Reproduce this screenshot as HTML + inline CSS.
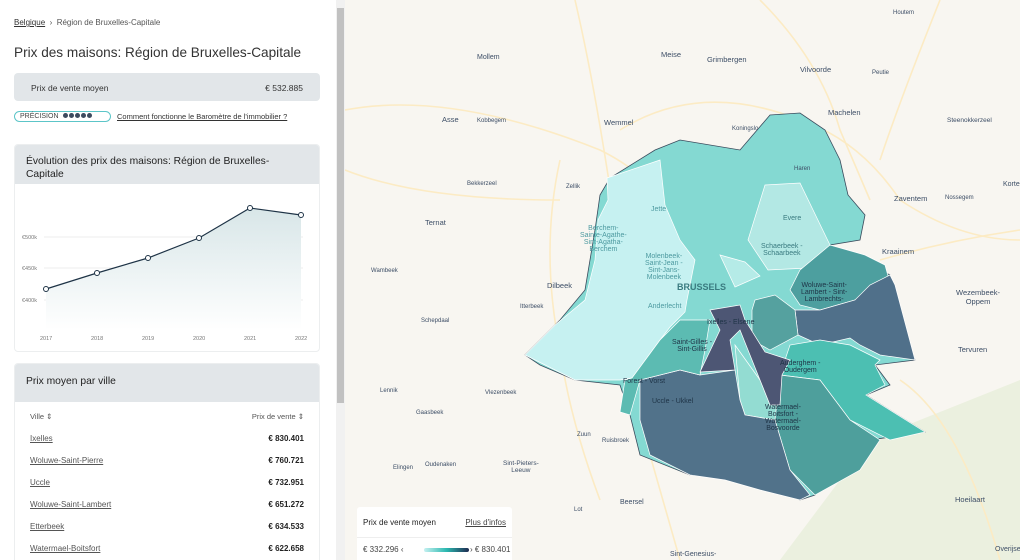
<!DOCTYPE html>
<html><head><meta charset="utf-8"><style>
*{box-sizing:border-box;margin:0;padding:0}
body{width:1020px;height:560px;overflow:hidden;font-family:"Liberation Sans",sans-serif;background:#fff;position:relative}
#left{position:absolute;left:0;top:0;width:336px;height:560px;background:#fff;overflow:hidden}
#sb{position:absolute;left:336px;top:0;width:9px;height:560px;background:#f1f1f1}
#sb div{position:absolute;left:1px;top:8px;width:7px;height:395px;background:#c1c1c1}
#map{position:absolute;left:345px;top:0;width:675px;height:560px;background:#f8f6f1;overflow:hidden}
.bc{position:absolute;left:14px;top:18px;font-size:8px;color:#555}
.bc u{color:#333}
h1{position:absolute;left:14px;top:45px;font-size:13.6px;font-weight:normal;color:#333;white-space:nowrap}
.pv{position:absolute;left:14px;top:73px;width:306px;height:28px;background:#e2e6e9;border-radius:4px;font-size:8.5px;color:#333}
.pv span{position:absolute;top:10px}
.prec{position:absolute;left:14px;top:111px;width:97px;height:11px;border:1px solid #5cc5c8;border-radius:6px;font-size:7px;color:#444;padding-left:5px;line-height:9px}
.prec i{display:inline-block;width:5px;height:5px;border-radius:50%;background:#3c4a5e;margin-left:1px;vertical-align:0}
.lnk{position:absolute;left:117px;top:112px;font-size:7.5px;color:#333;text-decoration:underline}
.card{position:absolute;left:14px;width:306px;border:1px solid #eceeef;border-radius:4px;overflow:hidden;background:#fff}
.card .hd{background:#e2e6e9;font-size:10.3px;color:#222;padding:10px 11px;line-height:13px}
.tb{position:absolute;left:30px;font-size:8px;color:#444}
.tb.r{left:auto;right:32px;font-weight:bold;color:#222}
.tb u{text-decoration:underline;color:#555}
.lbl{position:absolute;font-size:7px;color:#3d4e66;white-space:nowrap}
.lg{position:absolute;left:357px;top:507px;width:155px;height:53px;background:#fff;border-radius:3px 3px 0 0;font-size:8px;color:#222;white-space:nowrap}
</style></head><body>
<div id="left">
<div class="bc"><u>Belgique</u> &nbsp;›&nbsp; Région de Bruxelles-Capitale</div>
<h1>Prix des maisons: Région de Bruxelles-Capitale</h1>
<div class="pv"><span style="left:17px">Prix de vente moyen</span><span style="right:17px">€ 532.885</span></div>
<div class="prec">PRÉCISION &nbsp;<i></i><i></i><i></i><i></i><i></i></div>
<div class="lnk">Comment fonctionne le Baromètre de l'immobilier ?</div>
<div class="card" style="top:144px;height:208px">
<div class="hd" style="height:39px;padding-right:30px">Évolution des prix des maisons: Région de Bruxelles-Capitale</div>
</div>
<svg style="position:absolute;left:0;top:180px" width="336" height="170">
<defs><linearGradient id="g" x1="0" y1="0" x2="0" y2="1"><stop offset="0" stop-color="#d8e6e8"/><stop offset="1" stop-color="#fff"/></linearGradient></defs>
<line x1="44" y1="57" x2="303" y2="57" stroke="#eee"/><line x1="44" y1="88" x2="303" y2="88" stroke="#eee"/><line x1="44" y1="120" x2="303" y2="120" stroke="#eee"/>
<polygon points="46,109 97,93 148,78 199,58 250,28 301,35 301,150 46,150" fill="url(#g)"/>
<polyline points="46,109 97,93 148,78 199,58 250,28 301,35" fill="none" stroke="#1e3346" stroke-width="1.2"/>
<g fill="#fff" stroke="#1e3346" stroke-width="1"><circle cx="46" cy="109" r="2.5"/><circle cx="97" cy="93" r="2.5"/><circle cx="148" cy="78" r="2.5"/><circle cx="199" cy="58" r="2.5"/><circle cx="250" cy="28" r="2.5"/><circle cx="301" cy="35" r="2.5"/></g>
<g font-size="5.5" fill="#777" font-family="Liberation Sans"><text x="22" y="59">€500k</text><text x="22" y="90">€450k</text><text x="22" y="122">€400k</text>
<text x="40" y="160">2017</text><text x="91" y="160">2018</text><text x="142" y="160">2019</text><text x="193" y="160">2020</text><text x="244" y="160">2021</text><text x="295" y="160">2022</text></g>
</svg>
<div class="card" style="top:363px;height:210px"><div class="hd" style="height:38px;padding-top:11px">Prix moyen par ville</div></div>
<div class="tb" style="top:412px;font-size:7.5px;color:#555">Ville ⇕</div><div class="tb r" style="top:412px;font-size:7.5px;font-weight:normal;color:#555">Prix de vente ⇕</div>
<div class="tb" style="top:434px"><u>Ixelles</u></div><div class="tb r" style="top:434px">€ 830.401</div>
<div class="tb" style="top:456px"><u>Woluwe-Saint-Pierre</u></div><div class="tb r" style="top:456px">€ 760.721</div>
<div class="tb" style="top:478px"><u>Uccle</u></div><div class="tb r" style="top:478px">€ 732.951</div>
<div class="tb" style="top:500px"><u>Woluwe-Saint-Lambert</u></div><div class="tb r" style="top:500px">€ 651.272</div>
<div class="tb" style="top:522px"><u>Etterbeek</u></div><div class="tb r" style="top:522px">€ 634.533</div>
<div class="tb" style="top:544px"><u>Watermael-Boitsfort</u></div><div class="tb r" style="top:544px">€ 622.658</div>
</div>
<div id="sb"><div></div></div>
<div id="map">
<svg width="675" height="560" style="position:absolute;left:0;top:0">
<g transform="translate(-345,0)">
<polygon points="870,440 1020,380 1020,560 780,560" fill="#ebf0df"/>
<g fill="none" stroke="#fcebc4" stroke-width="1.6">
<path d="M575,0 Q610,150 640,420 L680,560"/>
<path d="M345,110 Q450,90 600,150 Q640,170 650,190"/>
<path d="M620,130 Q700,80 800,120 Q860,140 900,200 Q960,240 1020,240"/>
<path d="M760,0 Q820,60 840,130 L870,200"/>
<path d="M940,0 Q900,100 880,160"/>
<path d="M560,160 Q540,250 560,350 Q570,420 600,500"/>
<path d="M880,260 Q950,240 1020,230"/>
<path d="M900,380 Q960,420 1000,560"/>
<path d="M345,170 Q420,200 560,200"/>
</g>
<g stroke="#fff" stroke-width="0.7">
<polygon points="610,178 655,150 680,140 740,150 770,115 800,113 825,130 840,160 848,195 865,215 860,240 830,245 890,275 895,300 915,360 875,365 890,385 866,395 925,432 870,440 815,495 800,500 740,480 690,475 640,455 630,415 620,385 575,380 540,365 525,355 560,320 585,290 595,230 600,195" fill="#84d9d2" stroke="#3a4a5c" stroke-width="0.8"/>
<polygon points="607,178 660,160 665,205 680,240 695,260 687,300 685,312 670,327 660,340 632,378 620,380 575,380 545,365 525,355 555,325 585,300 595,260 598,220 608,200" fill="#c6f1f1"/>
<polygon points="765,185 800,183 830,245 808,268 768,270 748,240" fill="#b3e8e4"/>
<polygon points="720,255 745,262 760,276 735,287" fill="#b5ebe7"/>
<polygon points="830,245 865,255 885,265 890,283 855,300 820,310 800,305 790,290 800,270" fill="#4d9f9f"/>
<polygon points="890,275 895,285 915,360 880,355 860,345 850,338 820,345 798,335 795,310 820,310 855,300 870,285" fill="#50708a"/>
<polygon points="752,310 755,300 775,295 795,310 798,335 770,350 752,340" fill="#55a19f"/>
<polygon points="735,345 760,380 780,410 775,420 745,415 740,400" fill="#93dcd2"/>
<polygon points="780,375 790,345 820,340 850,345 880,360 875,365 885,385 866,395 925,432 890,440 850,420 820,380" fill="#4cbfb2"/>
<polygon points="780,375 820,380 850,420 880,440 860,470 815,495 790,470 775,420" fill="#4e9f9c"/>
<polygon points="640,380 680,370 700,375 735,370 740,400 745,415 775,420 790,470 810,495 800,500 760,490 725,480 690,475 650,455 640,420" fill="#51728a"/>
<polygon points="660,340 680,320 710,320 705,350 700,375 680,370 640,380 630,415 620,412 625,380 632,378" fill="#5cbbb2"/>
<polygon points="710,310 740,305 745,320 765,352 790,360 782,375 780,405 770,405 740,330 730,340 735,370 700,372 720,330" fill="#4d5674"/>
</g>
</g>
</svg>
<div class="lbl" style="left:316px;top:50px;font-size:7.5px">Meise</div>
<div class="lbl" style="left:132px;top:54px">Mollem</div>
<div class="lbl" style="left:362px;top:55px;font-size:7.5px">Grimbergen</div>
<div class="lbl" style="left:455px;top:65px;font-size:7.5px">Vilvoorde</div>
<div class="lbl" style="left:527px;top:70px;font-size:6px">Peutie</div>
<div class="lbl" style="left:548px;top:10px;font-size:6px">Houtem</div>
<div class="lbl" style="left:483px;top:108px;font-size:7.5px">Machelen</div>
<div class="lbl" style="left:97px;top:115px;font-size:7.5px">Asse</div>
<div class="lbl" style="left:132px;top:118px;font-size:6px">Kobbegem</div>
<div class="lbl" style="left:259px;top:118px;font-size:7.5px">Wemmel</div>
<div class="lbl" style="left:387px;top:126px;font-size:6px">Koningslo</div>
<div class="lbl" style="left:122px;top:181px;font-size:6px">Bekkerzeel</div>
<div class="lbl" style="left:221px;top:184px;font-size:6px">Zellik</div>
<div class="lbl" style="left:602px;top:117px;font-size:6.5px">Steenokkerzeel</div>
<div class="lbl" style="left:449px;top:166px;font-size:6px">Haren</div>
<div class="lbl" style="left:549px;top:194px;font-size:7.5px">Zaventem</div>
<div class="lbl" style="left:600px;top:195px;font-size:6px">Nossegem</div>
<div class="lbl" style="left:658px;top:181px;font-size:7px">Korte</div>
<div class="lbl" style="left:80px;top:218px;font-size:7.5px">Ternat</div>
<div class="lbl" style="left:537px;top:247px;font-size:7.5px">Kraainem</div>
<div class="lbl" style="left:26px;top:268px;font-size:6px">Wambeek</div>
<div class="lbl" style="left:202px;top:281px;font-size:7.5px">Dilbeek</div>
<div class="lbl" style="left:611px;top:288px;font-size:7.5px;text-align:center">Wezembeek-<br>Oppem</div>
<div class="lbl" style="left:175px;top:304px;font-size:6px">Itterbeek</div>
<div class="lbl" style="left:76px;top:318px;font-size:6px">Schepdaal</div>
<div class="lbl" style="left:613px;top:345px;font-size:7.5px">Tervuren</div>
<div class="lbl" style="left:35px;top:388px;font-size:6px">Lennik</div>
<div class="lbl" style="left:140px;top:390px;font-size:6px">Vlezenbeek</div>
<div class="lbl" style="left:71px;top:410px;font-size:6px">Gaasbeek</div>
<div class="lbl" style="left:232px;top:432px;font-size:6px">Zuun</div>
<div class="lbl" style="left:257px;top:438px;font-size:6px">Ruisbroek</div>
<div class="lbl" style="left:48px;top:465px;font-size:6px">Elingen</div>
<div class="lbl" style="left:80px;top:462px;font-size:6px">Oudenaken</div>
<div class="lbl" style="left:158px;top:460px;font-size:6.5px;text-align:center">Sint-Pieters-<br>Leeuw</div>
<div class="lbl" style="left:610px;top:495px;font-size:7.5px">Hoeilaart</div>
<div class="lbl" style="left:275px;top:499px;font-size:7px">Beersel</div>
<div class="lbl" style="left:229px;top:507px;font-size:6px">Lot</div>
<div class="lbl" style="left:325px;top:551px;font-size:7px">Sint-Genesius-</div>
<div class="lbl" style="left:650px;top:546px;font-size:7px">Overijse</div>
<div class="lbl" style="left:332px;top:282px;font-size:9px;font-weight:bold;color:#3a7b80">BRUSSELS</div>
<div class="lbl" style="left:416px;top:243px;color:#3a7b80;text-align:center">Schaerbeek -<br>Schaarbeek</div>
<div class="lbl" style="left:438px;top:215px;color:#3a7b80">Evere</div>
<div class="lbl" style="left:235px;top:225px;color:#4d9aa0;text-align:center">Berchem-<br>Sainte-Agathe-<br>Sint-Agatha-<br>Berchem</div>
<div class="lbl" style="left:300px;top:253px;color:#4d9aa0;text-align:center">Molenbeek-<br>Saint-Jean -<br>Sint-Jans-<br>Molenbeek</div>
<div class="lbl" style="left:303px;top:303px;color:#4d9aa0">Anderlecht</div>
<div class="lbl" style="left:306px;top:206px;color:#4d9aa0">Jette</div>
<div class="lbl" style="left:456px;top:282px;color:#1e3346;text-align:center">Woluwe-Saint-<br>Lambert - Sint-<br>Lambrechts-</div>
<div class="lbl" style="left:362px;top:319px;color:#1e3346">Ixelles - Elsene</div>
<div class="lbl" style="left:327px;top:339px;color:#1e3346;text-align:center">Saint-Gilles -<br>Sint-Gillis</div>
<div class="lbl" style="left:435px;top:360px;color:#1e3346;text-align:center">Auderghem -<br>Oudergem</div>
<div class="lbl" style="left:278px;top:378px;color:#1e3346">Forest - Vorst</div>
<div class="lbl" style="left:307px;top:398px;color:#1e3346">Uccle - Ukkel</div>
<div class="lbl" style="left:420px;top:404px;color:#1e3346;text-align:center">Watermael-<br>Boitsfort -<br>Watermael-<br>Bosvoorde</div>
</div>
<div class="lg">
<div style="position:absolute;left:6px;top:11px">Prix de vente moyen</div>
<div style="position:absolute;right:6px;top:11px;text-decoration:underline;color:#444">Plus d'infos</div>
<div style="position:absolute;left:0;top:30px;width:155px;border-top:1px solid #eee"></div>
<div style="position:absolute;left:6px;top:38px;color:#444">€ 332.296 ‹</div>
<div style="position:absolute;left:67px;top:41px;width:45px;height:4px;border-radius:2px;background:linear-gradient(90deg,#c6f1f1,#2bb8b0,#1e2a50)"></div>
<div style="position:absolute;left:113px;top:38px;color:#444">› € 830.401</div>
</div>
</body></html>
